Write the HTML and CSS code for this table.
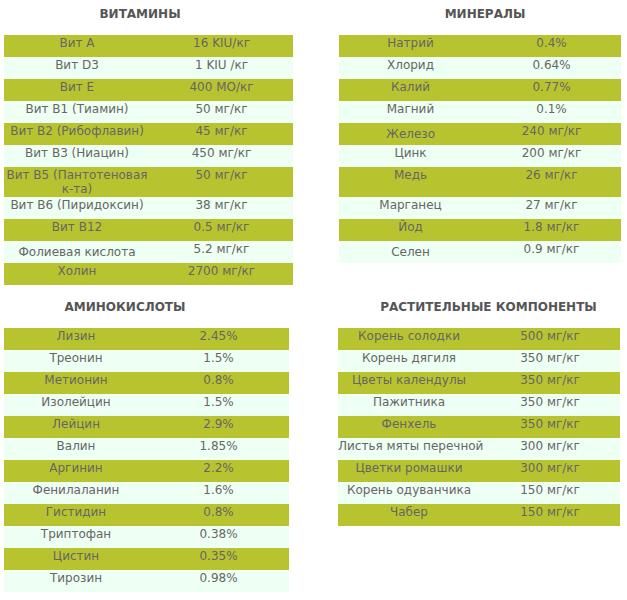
FILE: index.html
```html
<!DOCTYPE html>
<html lang="ru">
<head>
<meta charset="utf-8">
<title>Состав</title>
<link rel="stylesheet" href="styles.css">
</head>
<body>
<div class="page">
  <section class="panel panel-vit">
    <h2 class="title title-vit">ВИТАМИНЫ</h2>
    <table class="tbl tbl-vit">
      <colgroup><col class="c1"><col class="c2"></colgroup>
      <tr class="dark"><td>Вит А</td><td>16 KIU/кг</td></tr>
      <tr class="light"><td>Вит D3</td><td>1 KIU /кг</td></tr>
      <tr class="dark"><td>Вит Е</td><td>400 МО/кг</td></tr>
      <tr class="light"><td>Вит В1 (Тиамин)</td><td>50 мг/кг</td></tr>
      <tr class="dark"><td>Вит В2 (Рибофлавин)</td><td>45 мг/кг</td></tr>
      <tr class="light"><td>Вит В3 (Ниацин)</td><td>450 мг/кг</td></tr>
      <tr class="dark tall"><td>Вит В5 (Пантотеновая<br>к-та)</td><td>50 мг/кг</td></tr>
      <tr class="light"><td>Вит В6 (Пиридоксин)</td><td>38 мг/кг</td></tr>
      <tr class="dark"><td>Вит В12</td><td>0.5 мг/кг</td></tr>
      <tr class="light"><td class="low">Фолиевая кислота</td><td>5.2 мг/кг</td></tr>
      <tr class="dark"><td>Холин</td><td>2700 мг/кг</td></tr>
    </table>
  </section>
  <section class="panel panel-min">
    <h2 class="title title-min">МИНЕРАЛЫ</h2>
    <table class="tbl tbl-min">
      <colgroup><col class="c1"><col class="c2"></colgroup>
      <tr class="dark"><td>Натрий</td><td>0.4%</td></tr>
      <tr class="light"><td>Хлорид</td><td>0.64%</td></tr>
      <tr class="dark"><td>Калий</td><td>0.77%</td></tr>
      <tr class="light"><td>Магний</td><td>0.1%</td></tr>
      <tr class="dark"><td class="low">Железо</td><td>240 мг/кг</td></tr>
      <tr class="light"><td>Цинк</td><td>200 мг/кг</td></tr>
      <tr class="dark tall"><td>Медь</td><td>26 мг/кг</td></tr>
      <tr class="light"><td>Марганец</td><td>27 мг/кг</td></tr>
      <tr class="dark"><td>Йод</td><td>1.8 мг/кг</td></tr>
      <tr class="light"><td class="low">Селен</td><td>0.9 мг/кг</td></tr>
    </table>
  </section>
  <section class="panel panel-amino">
    <h2 class="title title-amino">АМИНОКИСЛОТЫ</h2>
    <table class="tbl tbl-amino">
      <colgroup><col class="c1"><col class="c2"></colgroup>
      <tr class="dark"><td>Лизин</td><td>2.45%</td></tr>
      <tr class="light"><td>Треонин</td><td>1.5%</td></tr>
      <tr class="dark"><td>Метионин</td><td>0.8%</td></tr>
      <tr class="light"><td>Изолейцин</td><td>1.5%</td></tr>
      <tr class="dark"><td>Лейцин</td><td>2.9%</td></tr>
      <tr class="light"><td>Валин</td><td>1.85%</td></tr>
      <tr class="dark"><td>Аргинин</td><td>2.2%</td></tr>
      <tr class="light"><td>Фенилаланин</td><td>1.6%</td></tr>
      <tr class="dark"><td>Гистидин</td><td>0.8%</td></tr>
      <tr class="light"><td>Триптофан</td><td>0.38%</td></tr>
      <tr class="dark"><td>Цистин</td><td>0.35%</td></tr>
      <tr class="light"><td>Тирозин</td><td>0.98%</td></tr>
    </table>
  </section>
  <section class="panel panel-plant">
    <h2 class="title title-plant">РАСТИТЕЛЬНЫЕ КОМПОНЕНТЫ</h2>
    <table class="tbl tbl-plant">
      <colgroup><col class="c1"><col class="c2"></colgroup>
      <tr class="dark"><td>Корень солодки</td><td>500 мг/кг</td></tr>
      <tr class="light"><td>Корень дягиля</td><td>350 мг/кг</td></tr>
      <tr class="dark"><td>Цветы календулы</td><td>350 мг/кг</td></tr>
      <tr class="light"><td>Пажитника</td><td>350 мг/кг</td></tr>
      <tr class="dark"><td>Фенхель</td><td>350 мг/кг</td></tr>
      <tr class="light"><td>Листья мяты перечной</td><td>300 мг/кг</td></tr>
      <tr class="dark"><td>Цветки ромашки</td><td>300 мг/кг</td></tr>
      <tr class="light"><td>Корень одуванчика</td><td>150 мг/кг</td></tr>
      <tr class="dark"><td>Чабер</td><td>150 мг/кг</td></tr>
    </table>
  </section>
</div>
</body>
</html>
```
FILE: styles.css
```css
html, body {
  margin: 0;
  padding: 0;
  background: #ffffff;
}

body {
  font-family: "DejaVu Sans", Verdana, sans-serif;
  font-size: 12px;
  color: #666666;
}

.page {
  display: grid;
  grid-template-columns: 289px 282px;
  column-gap: 46px;
  row-gap: 8px;
  padding-left: 4px;
  align-items: start;
}

.panel {
  display: flex;
  flex-direction: column;
}

.panel-min,
.panel-plant {
  margin-left: 0;
}

.panel-plant .tbl {
  margin-left: -1px;
}

.title {
  margin: 7px 0 14px;
  font-size: 12px;
  line-height: 14px;
  font-weight: bold;
  color: #555555;
  text-align: center;
}

.title-vit { padding-right: 17px; }
.title-amino { padding-right: 47px; }
.title-min { padding-left: 10px; }
.title-plant { padding-left: 17px; }

.tbl {
  border-collapse: collapse;
  border-spacing: 0;
  table-layout: fixed;
}

.tbl-vit { width: 289px; }
.tbl-vit .c1 { width: 146px; }
.tbl-vit .c2 { width: 143px; }

.tbl-amino { width: 285px; }
.tbl-amino .c1 { width: 144px; }
.tbl-amino .c2 { width: 141px; }

.tbl-min { width: 282px; }
.tbl-min .c1 { width: 143px; }
.tbl-min .c2 { width: 139px; }

.tbl-plant { width: 282px; }
.tbl-plant .c1 { width: 142px; }
.tbl-plant .c2 { width: 140px; }

.tbl tr {
  height: 22px;
}

.tbl tr.tall {
  height: 30px;
}

.tbl td {
  padding: 1px 0 0;
  vertical-align: top;
  text-align: center;
  line-height: 14px;
  white-space: nowrap;
}

.tbl td.low {
  padding-top: 4px;
}

.dark td {
  background: #b8c42f;
}

.light td {
  background: #eefff3;
}
```
